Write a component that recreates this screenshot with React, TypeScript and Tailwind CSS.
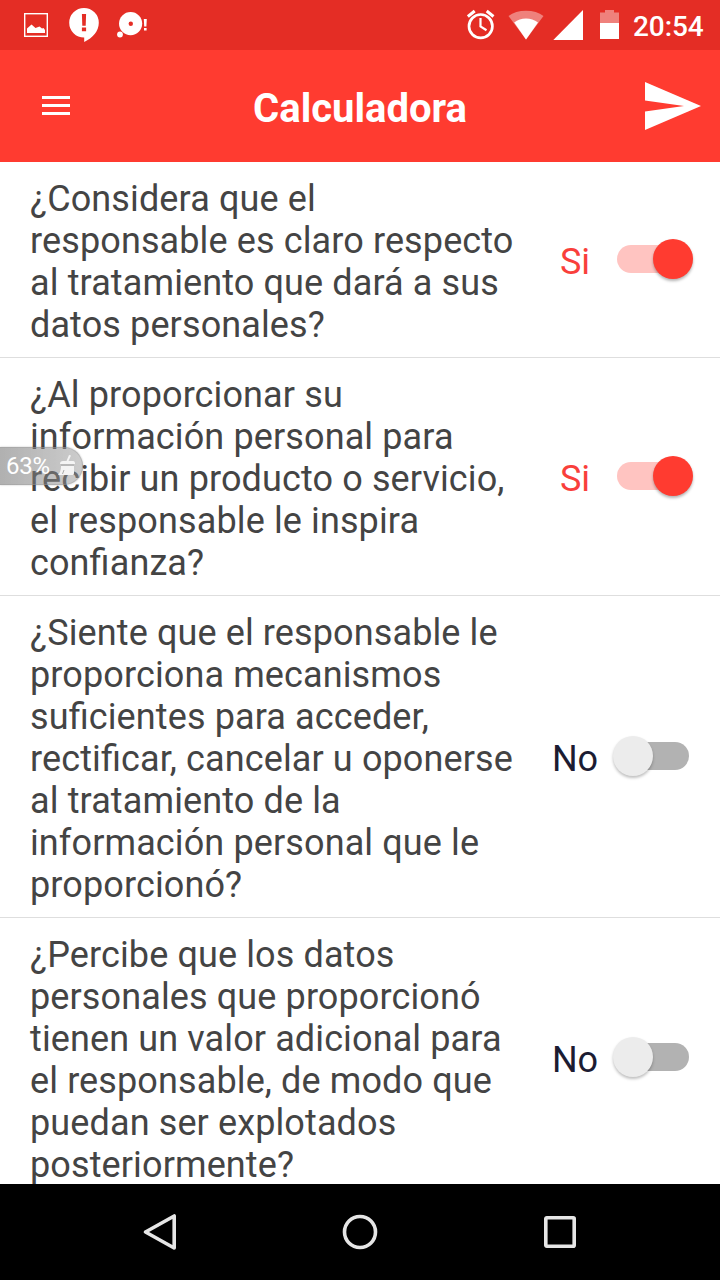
import React from "react";

type Question = { id: string; lines: string[]; on: boolean };

const questions: Question[] = [
  {
    id: "claridad",
    on: true,
    lines: [
      "¿Considera que el",
      "responsable es claro respecto",
      "al tratamiento que dará a sus",
      "datos personales?",
    ],
  },
  {
    id: "confianza",
    on: true,
    lines: [
      "¿Al proporcionar su",
      "información personal para",
      "recibir un producto o servicio,",
      "el responsable le inspira",
      "confianza?",
    ],
  },
  {
    id: "mecanismos",
    on: false,
    lines: [
      "¿Siente que el responsable le",
      "proporciona mecanismos",
      "suficientes para acceder,",
      "rectificar, cancelar u oponerse",
      "al tratamiento de la",
      "información personal que le",
      "proporcionó?",
    ],
  },
  {
    id: "valor",
    on: false,
    lines: [
      "¿Percibe que los datos",
      "personales que proporcionó",
      "tienen un valor adicional para",
      "el responsable, de modo que",
      "puedan ser explotados",
      "posteriormente?",
    ],
  },
];

function StatusBar() {
  return (
    <div className="flex h-[50px] shrink-0 items-center justify-between bg-[#e42d25] pl-6 pr-4 text-white">
      <div className="flex h-full items-center">
        <svg className="h-[50px] w-6" viewBox="0 0 24 50">
          <rect x="0.7" y="13.7" width="22.600" height="22.600" fill="none" stroke="#fff" strokeWidth="1.400" />
          <path d="M3 33v-4.500l4.500-4 4 3.500 4-1.500 2.500 2 1.500-.5 1.500 2v3z" fill="#fff" />
        </svg>
        <svg className="ml-5 h-[50px] w-8" viewBox="0 0 32 50">
          <path d="M16 8a14.800 14.800 0 0 1 14.800 14.800c0 8.500-6 15.200-14.600 19.200V37.600H16a14.800 14.800 0 0 1 0-29.600z" fill="#fff" />
          <path d="M13.900 14h4.200l-.4 11.800h-3.400zM13.900 27.500h4.200v3.700h-4.200z" fill="#e42d25" />
        </svg>
        <svg className="ml-4 h-[50px] w-8" viewBox="0 0 32 50">
          <circle cx="14.600" cy="23.600" r="11.600" fill="#fff" />
          <circle cx="14.800" cy="23.700" r="2.200" fill="#e42d25" />
          <circle cx="4" cy="34.500" r="2.900" fill="#fff" />
          <path d="M27.800 19h3l-.4 7.500h-2.200zM28 28h2.600v2.500H28z" fill="#fff" />
        </svg>
      </div>
      <div className="flex h-full items-center">
        <svg className="h-[50px] w-7" viewBox="0 0 28 50" fill="none" stroke="#fff">
          <circle cx="13.700" cy="26.200" r="11.700" strokeWidth="2.700" />
          <path d="M13.500 18v8.500l6 3.700" strokeWidth="2.200" />
          <path d="M.9 16.500l6.800-5.500M26.500 16.500L19.700 11" strokeWidth="3" />
        </svg>
        <svg className="ml-[13px] h-[50px] w-9" viewBox="0 0 36 50" fill="#fff">
          <path d="M18 39.500L.5 16C5 12.500 11 10.800 18 10.800S31 12.500 35.500 16z" opacity=".4" />
          <path d="M18 39.500L6.200 22.500c3.500-2.800 7.300-4 11.800-4s8.300 1.200 12 4z" />
        </svg>
        <svg className="ml-[9px] h-[50px] w-[30px]" viewBox="0 0 30 50">
          <path d="M.3 40H30V10z" fill="#fff" />
        </svg>
        <svg className="ml-[17px] h-[50px] w-[19px]" viewBox="0 0 19 50" fill="#fff">
          <path d="M0 12.500h5V10h9v2.500h5V23H0z" opacity=".4" />
          <path d="M0 23h19v16H0z" />
        </svg>
        <span className="ml-[14px] mt-[3px] w-[71px] whitespace-nowrap text-[28px] font-medium leading-[34px] tracking-[-0.1px]">20:54</span>
      </div>
    </div>
  );
}

function Header() {
  return (
    <header className="grid h-28 shrink-0 grid-cols-[120px_1fr_120px] items-center bg-[#ff3b30] text-white">
      <button aria-label="Menú" className="mb-[2px] ml-[42px] flex w-7 flex-col gap-[5px]">
        <span className="h-[3px] bg-white" />
        <span className="h-[3px] bg-white" />
        <span className="h-[3px] bg-white" />
      </button>
      <h1 className="pt-[6px] text-center text-[40px] font-bold leading-[48px]">Calculadora</h1>
      <button aria-label="Enviar" className="ml-[45px]">
        <svg className="h-12 w-14" viewBox="0 0 56 48">
          <path d="M0 0l56 24L0 48V29.500L39 24 0 18.500z" fill="#fff" />
        </svg>
      </button>
    </header>
  );
}

function Toggle({ on }: { on: boolean }) {
  return (
    <div className="mb-[2px] grid h-10 w-20 items-center" role="switch" aria-checked={on}>
      <span
        className={`col-start-1 row-start-1 mx-1 h-7 rounded-full ${on ? "bg-[#ffc4c1]" : "bg-[#b2b2b2]"}`}
      />
      <span
        className={`col-start-1 row-start-1 size-10 rounded-full ${
          on
            ? "justify-self-end bg-[#ff3b30] shadow-[0_2px_3px_rgba(0,0,0,0.3)]"
            : "justify-self-start bg-[#ececec] shadow-[0_2px_3px_rgba(0,0,0,0.25)]"
        }`}
      />
    </div>
  );
}

function QuestionRow({ question }: { question: Question }) {
  const { lines, on } = question;
  return (
    <li className="flex shrink-0 items-center border-b border-[#dedede] pl-[30px] pr-[27px]">
      <p className="flex-1 whitespace-nowrap pb-[11px] pt-4 text-[36px] leading-[42px] tracking-[0.12px] text-[#444] [font-feature-settings:'liga']">
        {lines.map((line) => (
          <span key={line} className="block">
            {line}
          </span>
        ))}
      </p>
      <span
        className={`mr-[8px] w-[60px] pt-[5px] text-center text-[36px] leading-[42px] ${
          on ? "text-[#f93f3b]" : "text-[#1c1c32]"
        }`}
      >
        {on ? "Si" : "No"}
      </span>
      <Toggle on={on} />
    </li>
  );
}

function MemoryBadge() {
  return (
    <div className="absolute left-0 top-[447px] flex h-[38px] w-[83px] items-center rounded-r-full border border-l-0 border-[#999]/40 bg-linear-to-r from-[#707070]/55 to-[#999]/50 pl-[6px] text-white shadow-[0_0_2px_rgba(0,0,0,0.25)]">
      <span className="w-[50px] whitespace-nowrap text-[24px] leading-[30px] tracking-[-0.3px]">63%</span>
      <svg className="h-6 w-5" viewBox="0 0 20 24">
        <path d="M13 1l2 .5-2.500 5.500H17c2 0 2 2 2 3H4c0-2 1-3 3-3h3.500zM5 12h13v7c0 1.500-1 2-2 2H2c2-2 3-5 3-9z" fill="#f4f4f4" />
        <path d="M5 11h13M8 16l-1.500 4" stroke="#aaa" strokeWidth="1" />
      </svg>
    </div>
  );
}

function NavBar() {
  return (
    <nav className="grid h-24 shrink-0 grid-cols-[260px_200px_260px] place-items-center bg-black">
      <button aria-label="Atrás" className="ml-[60px]">
        <svg className="size-10" viewBox="0 0 40 40" fill="none" stroke="#e6e6e6" strokeWidth="3.600">
          <path d="M34.200 4v32L5.500 20z" strokeLinejoin="round" />
        </svg>
      </button>
      <button aria-label="Inicio">
        <svg className="size-10" viewBox="0 0 40 40" fill="none" stroke="#e6e6e6" strokeWidth="3.600">
          <circle cx="20" cy="20" r="15.500" />
        </svg>
      </button>
      <button aria-label="Recientes" className="mr-[60px]">
        <svg className="size-10" viewBox="0 0 40 40" fill="none" stroke="#e6e6e6" strokeWidth="3.600">
          <rect x="5.800" y="5.800" width="28.400" height="28.400" rx="1" />
        </svg>
      </button>
    </nav>
  );
}

export default function App() {
  return (
    <div className="relative flex h-[1280px] w-[720px] flex-col overflow-hidden bg-white font-['Roboto',sans-serif]">
      <StatusBar />
      <Header />
      <main className="min-h-0 flex-1 overflow-hidden">
        <ul className="flex flex-col">
          {questions.map((question) => (
            <QuestionRow key={question.id} question={question} />
          ))}
        </ul>
      </main>
      <NavBar />
      <MemoryBadge />
    </div>
  );
}
